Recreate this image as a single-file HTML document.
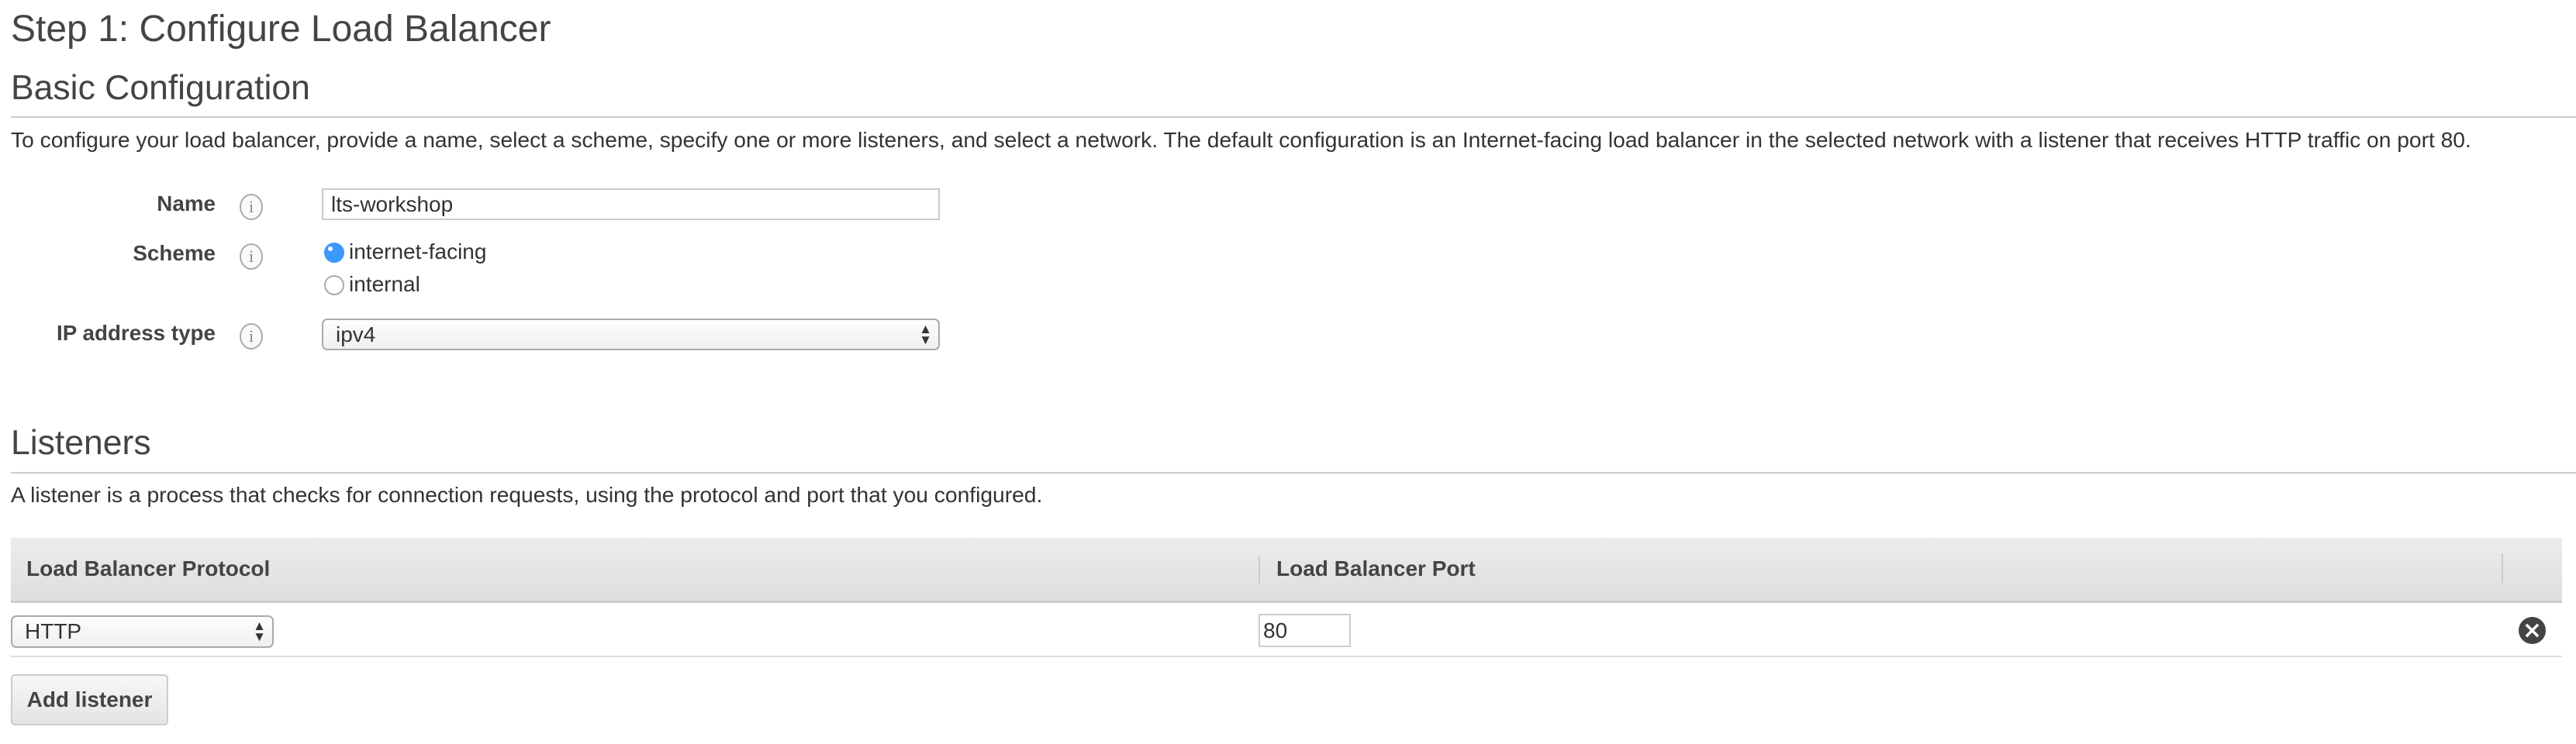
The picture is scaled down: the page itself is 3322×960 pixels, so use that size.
<!DOCTYPE html>
<html><head><meta charset="utf-8"><style>
body{margin:0;width:3322px;height:960px;background:#fff;font-family:"Liberation Sans",Arial,sans-serif;color:#333;position:relative;overflow:hidden}
.a{position:absolute;white-space:nowrap}
.h1{font-size:48px;color:#444;left:14px;top:10px}
.h2{font-size:44.5px;color:#444;left:14px}
.hr{position:absolute;left:14px;right:0;height:2px;background:#ccc}
.p{font-size:28.2px;left:14px}
.lbl{font-size:27.8px;font-weight:bold;color:#444;text-align:right;width:264px;left:14px}
.info{position:absolute;width:30px;height:34px;border:2px solid #aaa;border-radius:50%;left:309px;box-sizing:border-box;background:#fafafa;text-align:center;font:22px "Liberation Serif",serif;color:#888;line-height:30px}
.box{position:absolute;box-sizing:border-box;border:2px solid #ccc;background:#fff;font-size:28px;padding-left:10px}
.sel{position:absolute;box-sizing:border-box;border:2px solid #aaa;border-radius:7px;background:linear-gradient(#fdfdfd,#f0f0f0);font-size:28px;padding-left:16px}
.arr{position:absolute;right:8px;top:50%;transform:translateY(-50%);font-size:17px;line-height:14px;color:#333}
.radio{position:absolute;width:26px;height:26px;border-radius:50%;box-sizing:border-box}
</style></head><body>
<div class="a h1">Step 1: Configure Load Balancer</div>
<div class="a h2" style="top:89px">Basic Configuration</div>
<div class="hr" style="top:150px"></div>
<div class="a p" style="top:164px">To configure your load balancer, provide a name, select a scheme, specify one or more listeners, and select a network. The default configuration is an Internet-facing load balancer in the selected network with a listener that receives HTTP traffic on port 80.</div>

<div class="a lbl" style="top:247px">Name</div>
<div class="info" style="top:250px">i</div>
<div class="box" style="left:415px;top:243px;width:797px;height:41px;line-height:37px">lts-workshop</div>

<div class="a lbl" style="top:311px">Scheme</div>
<div class="info" style="top:314px">i</div>
<div class="radio" style="left:418px;top:313px;background:#3b99fc;border:8px solid #3b99fc"><div style="position:absolute;left:-3px;top:-3px;width:6px;height:6px;background:#fff;border-radius:50%"></div></div>
<div class="a" style="left:450px;top:309px;font-size:28px">internet-facing</div>
<div class="radio" style="left:418px;top:355px;border:2px solid #aaa;background:#fff"></div>
<div class="a" style="left:450px;top:351px;font-size:28px">internal</div>

<div class="a lbl" style="top:414px">IP address type</div>
<div class="info" style="top:417px">i</div>
<div class="sel" style="left:415px;top:411px;width:797px;height:41px;line-height:37px">ipv4<div class="arr">▲<br>▼</div></div>

<div class="a h2" style="top:547px">Listeners</div>
<div class="hr" style="top:609px"></div>
<div class="a p" style="top:622px">A listener is a process that checks for connection requests, using the protocol and port that you configured.</div>

<div style="position:absolute;left:14px;top:694px;width:3290px;height:81px;background:linear-gradient(#ececec,#dedede);border-bottom:3px solid #ccc"></div>
<div class="a" style="left:34px;top:718px;font-size:28px;font-weight:bold;color:#444">Load Balancer Protocol</div>
<div style="position:absolute;left:1623px;top:717px;width:2px;height:38px;background:#ccc"></div>
<div class="a" style="left:1646px;top:718px;font-size:28px;font-weight:bold;color:#444">Load Balancer Port</div>
<div style="position:absolute;left:3226px;top:714px;width:2px;height:38px;background:#ccc"></div>

<div class="sel" style="left:14px;top:794px;width:339px;height:42px;line-height:38px;padding-left:16px">HTTP<div class="arr">▲<br>▼</div></div>
<div class="box" style="left:1623px;top:792px;width:119px;height:43px;line-height:39px;padding-left:4px">80</div>
<div style="position:absolute;left:3248px;top:796px;width:35px;height:35px;border-radius:50%;background:#444;color:#fff;text-align:center;font:bold 30px/35px 'DejaVu Sans',sans-serif">×</div>
<div style="position:absolute;left:14px;top:846px;width:3290px;height:2px;background:#ddd"></div>

<div style="position:absolute;left:14px;top:870px;width:203px;height:66px;box-sizing:border-box;border:2px solid #ccc;border-radius:5px;background:linear-gradient(#f7f7f7,#e4e4e4);font-size:28px;font-weight:bold;color:#444;text-align:center;line-height:62px">Add listener</div>
</body></html>
